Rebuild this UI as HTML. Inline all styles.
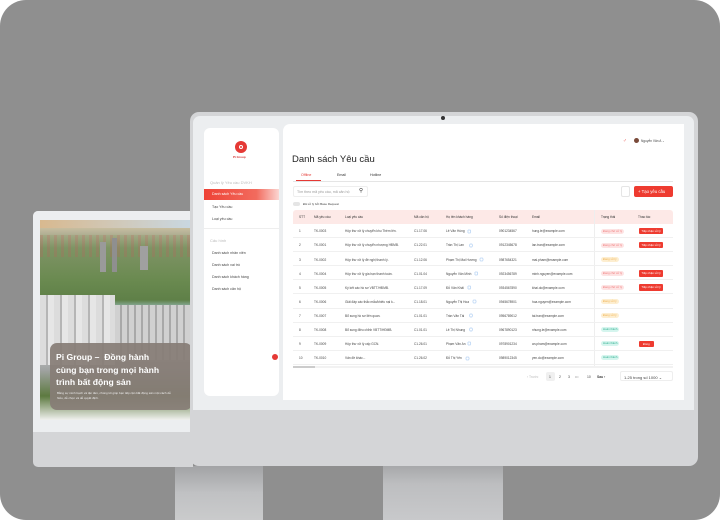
<!DOCTYPE html>
<html><head><meta charset="utf-8"><style>
*{margin:0;padding:0;box-sizing:border-box}
body{width:720px;height:520px;background:#fff;position:relative;overflow:hidden;font-family:"Liberation Sans","Noto Sans CJK SC",sans-serif}
.a{position:absolute}
.t{position:absolute;white-space:nowrap;color:#444;font-size:3.6px}
.row{position:absolute;left:293px;width:380px;height:14.1px;border-bottom:0.5px solid #f0f0f0}
.b{position:absolute;height:5px;border-radius:3px;font-size:2.8px;line-height:5px;padding:0 2px;white-space:nowrap}
</style></head><body>
<div class="a" style="left:0;top:0;width:720px;height:520px;background:#8f8f8f;border-radius:26px"></div>
<div class="a" style="left:383px;top:460px;width:120px;height:60px;background:linear-gradient(#a0a1a3,#bdbec0 40%,#c8c9cb)"></div>
<div class="a" style="left:175px;top:466px;width:88px;height:54px;background:linear-gradient(#a2a3a5,#c0c1c3 50%,#cacbcc)"></div>
<div class="a" style="left:190px;top:112px;width:508px;height:354px;background:#d4d5d7;border-radius:9px"></div>
<div class="a" style="left:193px;top:116px;width:501px;height:294px;background:#eceef0;border-radius:7px 7px 0 0"></div>
<div class="a" style="left:441px;top:116px;width:4px;height:4px;border-radius:2px;background:#333"></div>
<div class="a" style="left:204px;top:128px;width:75px;height:268px;background:#fff;border-radius:6px"></div>
<div class="a" style="left:235px;top:141px;width:12px;height:12px;border-radius:6px;background:#e53935"></div>
<div class="a" style="left:239px;top:145px;width:4px;height:4px;border-radius:2px;border:0.8px solid #fff"></div>
<div class="t" style="left:233px;top:155px;font-size:3px;color:#d32f2f;font-weight:bold">Pi Group</div>
<div class="t" style="left:210px;top:180px;color:#bbb;font-size:4px">Quản lý Yêu cầu DVKH</div>
<div class="a" style="left:204px;top:189px;width:75px;height:11px;background:linear-gradient(90deg,#ee4236,#f26b5e 70%,#fbd6d2)"></div>
<div class="t" style="left:212px;top:192px;color:#fff">Danh sách Yêu cầu</div>
<div class="t" style="left:212px;top:205px">Tạo Yêu cầu</div>
<div class="t" style="left:212px;top:217px">Loại yêu cầu</div>
<div class="a" style="left:204px;top:228px;width:75px;height:0.5px;background:#eee"></div>
<div class="t" style="left:210px;top:238px;color:#bbb;font-size:4px">Cấu hình</div>
<div class="t" style="left:212px;top:251px">Danh sách nhân viên</div>
<div class="t" style="left:212px;top:263px">Danh sách vai trò</div>
<div class="t" style="left:212px;top:275px">Danh sách khách hàng</div>
<div class="t" style="left:212px;top:287px">Danh sách căn hộ</div>
<div class="a" style="left:272px;top:354px;width:6px;height:6px;border-radius:3px;background:#e53935"></div>
<div class="a" style="left:283px;top:124px;width:401px;height:276px;background:#fff;border-radius:7px 0 0 0"></div>
<div class="t" style="left:623px;top:138px;color:#e53935;font-size:5px">♂</div>
<div class="a" style="left:634px;top:138px;width:5px;height:5px;border-radius:3px;background:#7a4a3a"></div>
<div class="t" style="left:641px;top:138.5px;font-size:3.2px">Nguyễn Văn A ⌄</div>
<div class="t" style="left:292px;top:154px;font-size:9.5px;color:#222">Danh sách Yêu cầu</div>
<div class="t" style="left:301px;top:173px;color:#e53935">Offline</div>
<div class="t" style="left:337px;top:173px;color:#333">Email</div>
<div class="t" style="left:370px;top:173px;color:#333">Hotline</div>
<div class="a" style="left:293px;top:180.5px;width:380px;height:0.5px;background:#e5e5e5"></div>
<div class="a" style="left:296px;top:179.5px;width:25px;height:1.3px;background:#e53935"></div>
<div class="a" style="left:293px;top:186px;width:75px;height:11px;border:0.5px solid #eee;border-radius:2px"></div>
<div class="t" style="left:297px;top:189.5px;color:#999">Tìm theo mã yêu cầu, mã căn hộ</div>
<div class="t" style="left:359px;top:187.5px;color:#333;font-size:5.5px">⚲</div>
<div class="a" style="left:293px;top:202px;width:7px;height:3.5px;border-radius:2px;background:#e5e5e5"></div>
<div class="t" style="left:303px;top:202px;font-size:3px">Đã xử lý bởi Base Request</div>
<div class="a" style="left:621px;top:186px;width:9px;height:11px;border:0.5px solid #e5e5e5;border-radius:2px"></div>
<div class="a" style="left:634px;top:186px;width:39px;height:11px;background:#ee3b30;border-radius:2px"></div>
<div class="t" style="left:638px;top:189px;color:#fff;font-size:4.3px">+ Tạo yêu cầu</div>
<div class="a" style="left:293px;top:210px;width:380px;height:14px;background:#fde9e7;border-radius:3px 3px 0 0"></div>
<div class="a" style="left:594px;top:210px;width:0.5px;height:156px;background:#eee"></div>
<div id="tb"></div>
<div class="a" style="left:293px;top:366px;width:380px;height:1.5px;background:#f2f2f2"></div>
<div class="a" style="left:293px;top:366px;width:22px;height:1.5px;background:#ccc"></div>
<div class="t" style="left:527px;top:375px;color:#bbb;font-size:3.4px">‹ Trước</div>
<div class="a" style="left:546px;top:372px;width:9px;height:9px;background:#f0f0f0;border-radius:2px"></div>
<div class="t" style="left:549px;top:375px;font-size:3.4px">1</div>
<div class="t" style="left:559px;top:375px;font-size:3.4px">2</div>
<div class="t" style="left:568px;top:375px;font-size:3.4px">3</div>
<div class="t" style="left:575px;top:375px;font-size:3.4px;color:#999">•••</div>
<div class="t" style="left:587px;top:375px;font-size:3.4px">10</div>
<div class="t" style="left:597px;top:375px;font-size:3.4px;font-weight:bold">Sau ›</div>
<div class="a" style="left:620px;top:371px;width:53px;height:10px;border:0.5px solid #eee;border-radius:2px"></div>
<div class="t" style="left:624px;top:374.5px;font-size:4px">1-25 trong số 1000 ⌄</div>
<div class="a" style="left:33px;top:211px;width:160px;height:256px;background:#d4d5d7;border-radius:5px 0 0 5px"></div>
<div class="a" style="left:33px;top:211px;width:157px;height:221px;background:#eceef0;border-radius:5px 0 0 0"></div>
<div class="a" style="left:40px;top:220px;width:150px;height:200px;overflow:hidden;background:linear-gradient(180deg,#e3cfa8 0%,#b9b49a 6%,#7f9366 14%,#6a8a50 30%,#5f8048 40%,#a5c8cf 45%,#6d8f50 49%,#4f7a3a 58%,#c8c8c8 64%,#a0a3a2 75%,#5d7a40 88%,#f0f0ee 100%)">
 <div class="a" style="left:0;top:0;width:150px;height:8px;background:linear-gradient(90deg,#d8b98f,#c9d7e0)"></div>
 <div class="a" style="left:0;top:15px;width:150px;height:22px;background:repeating-linear-gradient(90deg,rgba(170,110,90,.35) 0 3px,rgba(120,150,90,.2) 3px 7px)"></div>
 <div class="a" style="left:60px;top:22px;width:6px;height:30px;background:#9a9a9a"></div>
 <div class="a" style="left:72px;top:18px;width:5px;height:34px;background:#8f8f8f"></div>
 <div class="a" style="left:100px;top:26px;width:8px;height:24px;background:#a0a0a0"></div>
 <div class="a" style="left:0;top:75px;width:75px;height:70px;background:repeating-linear-gradient(90deg,#dcdcdc 0 6px,#b5b5b5 6px 8px,#e6e6e6 8px 14px)"></div>
 <div class="a" style="left:75px;top:85px;width:75px;height:55px;background:repeating-linear-gradient(90deg,#d0d0d0 0 5px,#a8a8a8 5px 7px)"></div>
 <div class="a" style="left:10px;top:123px;width:142px;height:67px;border-radius:7px;background:rgba(135,125,118,.93)"></div>
 <div class="t" style="left:16px;top:131px;color:#fff;font-size:8.6px;line-height:12.5px;white-space:normal;width:108px;font-weight:bold">Pi Group –&nbsp; Đồng hành cùng bạn trong mọi hành trình bất động sản</div>
 <div class="t" style="left:17px;top:171px;color:#eee;font-size:3px;line-height:5px;white-space:normal;width:118px">Bằng sự minh bạch và tận tâm, chúng tôi giúp bạn tiếp cận bất động sản một cách dễ hiểu, dễ chọn và dễ quyết định.</div>
</div>
<script>
var rows=[
["1","TK-0003","Hộp thư xử lý chuyển khu Thềm lên.","C1.17.06","Lê Văn Hùng","0901234567","hung.le@example.com",0],
["2","TK-0001","Hộp thư xử lý chuyển nhượng HĐMB.","C1.22.01","Trần Thị Lan","0912345678","lan.tran@example.com",0],
["3","TK-0002","Hộp thư xử lý đề nghị thanh lý.","C1.12.06","Phạm Thị Mai Hương","0987654321","mai.pham@example.com",1],
["4","TK-0004","Hộp thư xử lý gia hạn thanh toán.","C1.01.04","Nguyễn Văn Minh","0923456789","minh.nguyen@example.com",0],
["5","TK-0005","Ký kết các hồ sơ VBTT/HĐMB.","C1.17.09","Đỗ Văn Khải","0934567890","khai.do@example.com",0],
["6","TK-0006","Giải đáp các thắc mắc/khiếu nại k...","C1.18.01","Nguyễn Thị Hoa","0945678901","hoa.nguyen@example.com",1],
["7","TK-0007","Bổ sung hồ sơ liên quan.","C1.01.01","Trần Văn Tài","0956789012","tai.tran@example.com",1],
["8","TK-0008","Bổ sung điều chỉnh VBTT/HĐMB.","C1.01.01","Lê Thị Nhung","0967890123","nhung.le@example.com",2],
["9","TK-0009","Hộp thư xử lý cấp GCN.","C1.26.01","Phạm Văn An","0978901234","an.pham@example.com",2],
["10","TK-0010","Vấn đề khác...","C1.26.02","Đỗ Thị Yến","0989012345","yen.do@example.com",2]];
var xs=[299,314,345,414,446,499,532];
var h='';
var hd=["STT","Mã yêu cầu","Loại yêu cầu","Mã căn hộ","Họ tên khách hàng","Số điện thoại","Email"];
for(var i=0;i<7;i++)h+='<div class="t" style="left:'+xs[i]+'px;top:215px;font-size:3.2px;color:#333">'+hd[i]+'</div>';
h+='<div class="t" style="left:601px;top:215px;font-size:3.2px;color:#333">Trạng thái</div><div class="t" style="left:638px;top:215px;font-size:3.2px;color:#333">Thao tác</div>';
var st=[["Đang chờ xử lý","#fde3e3","#f07a7a"],["Đang xử lý","#fdeed0","#f0b050"],["Hoàn thành","#d5f5ee","#30b090"]];
for(var r=0;r<10;r++){var y=224+r*14.1;var d=rows[r];
h+='<div class="row" style="top:'+y+'px"></div>';
for(var i=0;i<7;i++){h+='<div class="t" style="left:'+xs[i]+'px;top:'+(y+5.3)+'px;font-size:3.2px">'+d[i]+'</div>';}
h+='<div class="t" style="left:'+(446+d[4].length*1.75+2)+'px;top:'+(y+4.6)+'px;font-size:4px;color:#4a90e2">◎</div>';
var s=st[d[7]];h+='<div class="b" style="left:601px;top:'+(y+4.5)+'px;background:'+s[1]+';color:'+s[2]+'">'+s[0]+'</div>';
if(d[7]==0)h+='<div class="b" style="left:639px;top:'+(y+3.8)+'px;height:6.5px;line-height:6.5px;border-radius:1px;background:#ee3b30;color:#fff;padding:0 2.5px">Tiếp nhận xử lý</div>';
if(r==8)h+='<div class="b" style="left:639px;top:'+(y+3.8)+'px;height:6.5px;line-height:6.5px;border-radius:1px;background:#ee3b30;color:#fff;padding:0 4px">Đóng</div>';
}
document.getElementById('tb').innerHTML=h;
</script>
</body></html>
